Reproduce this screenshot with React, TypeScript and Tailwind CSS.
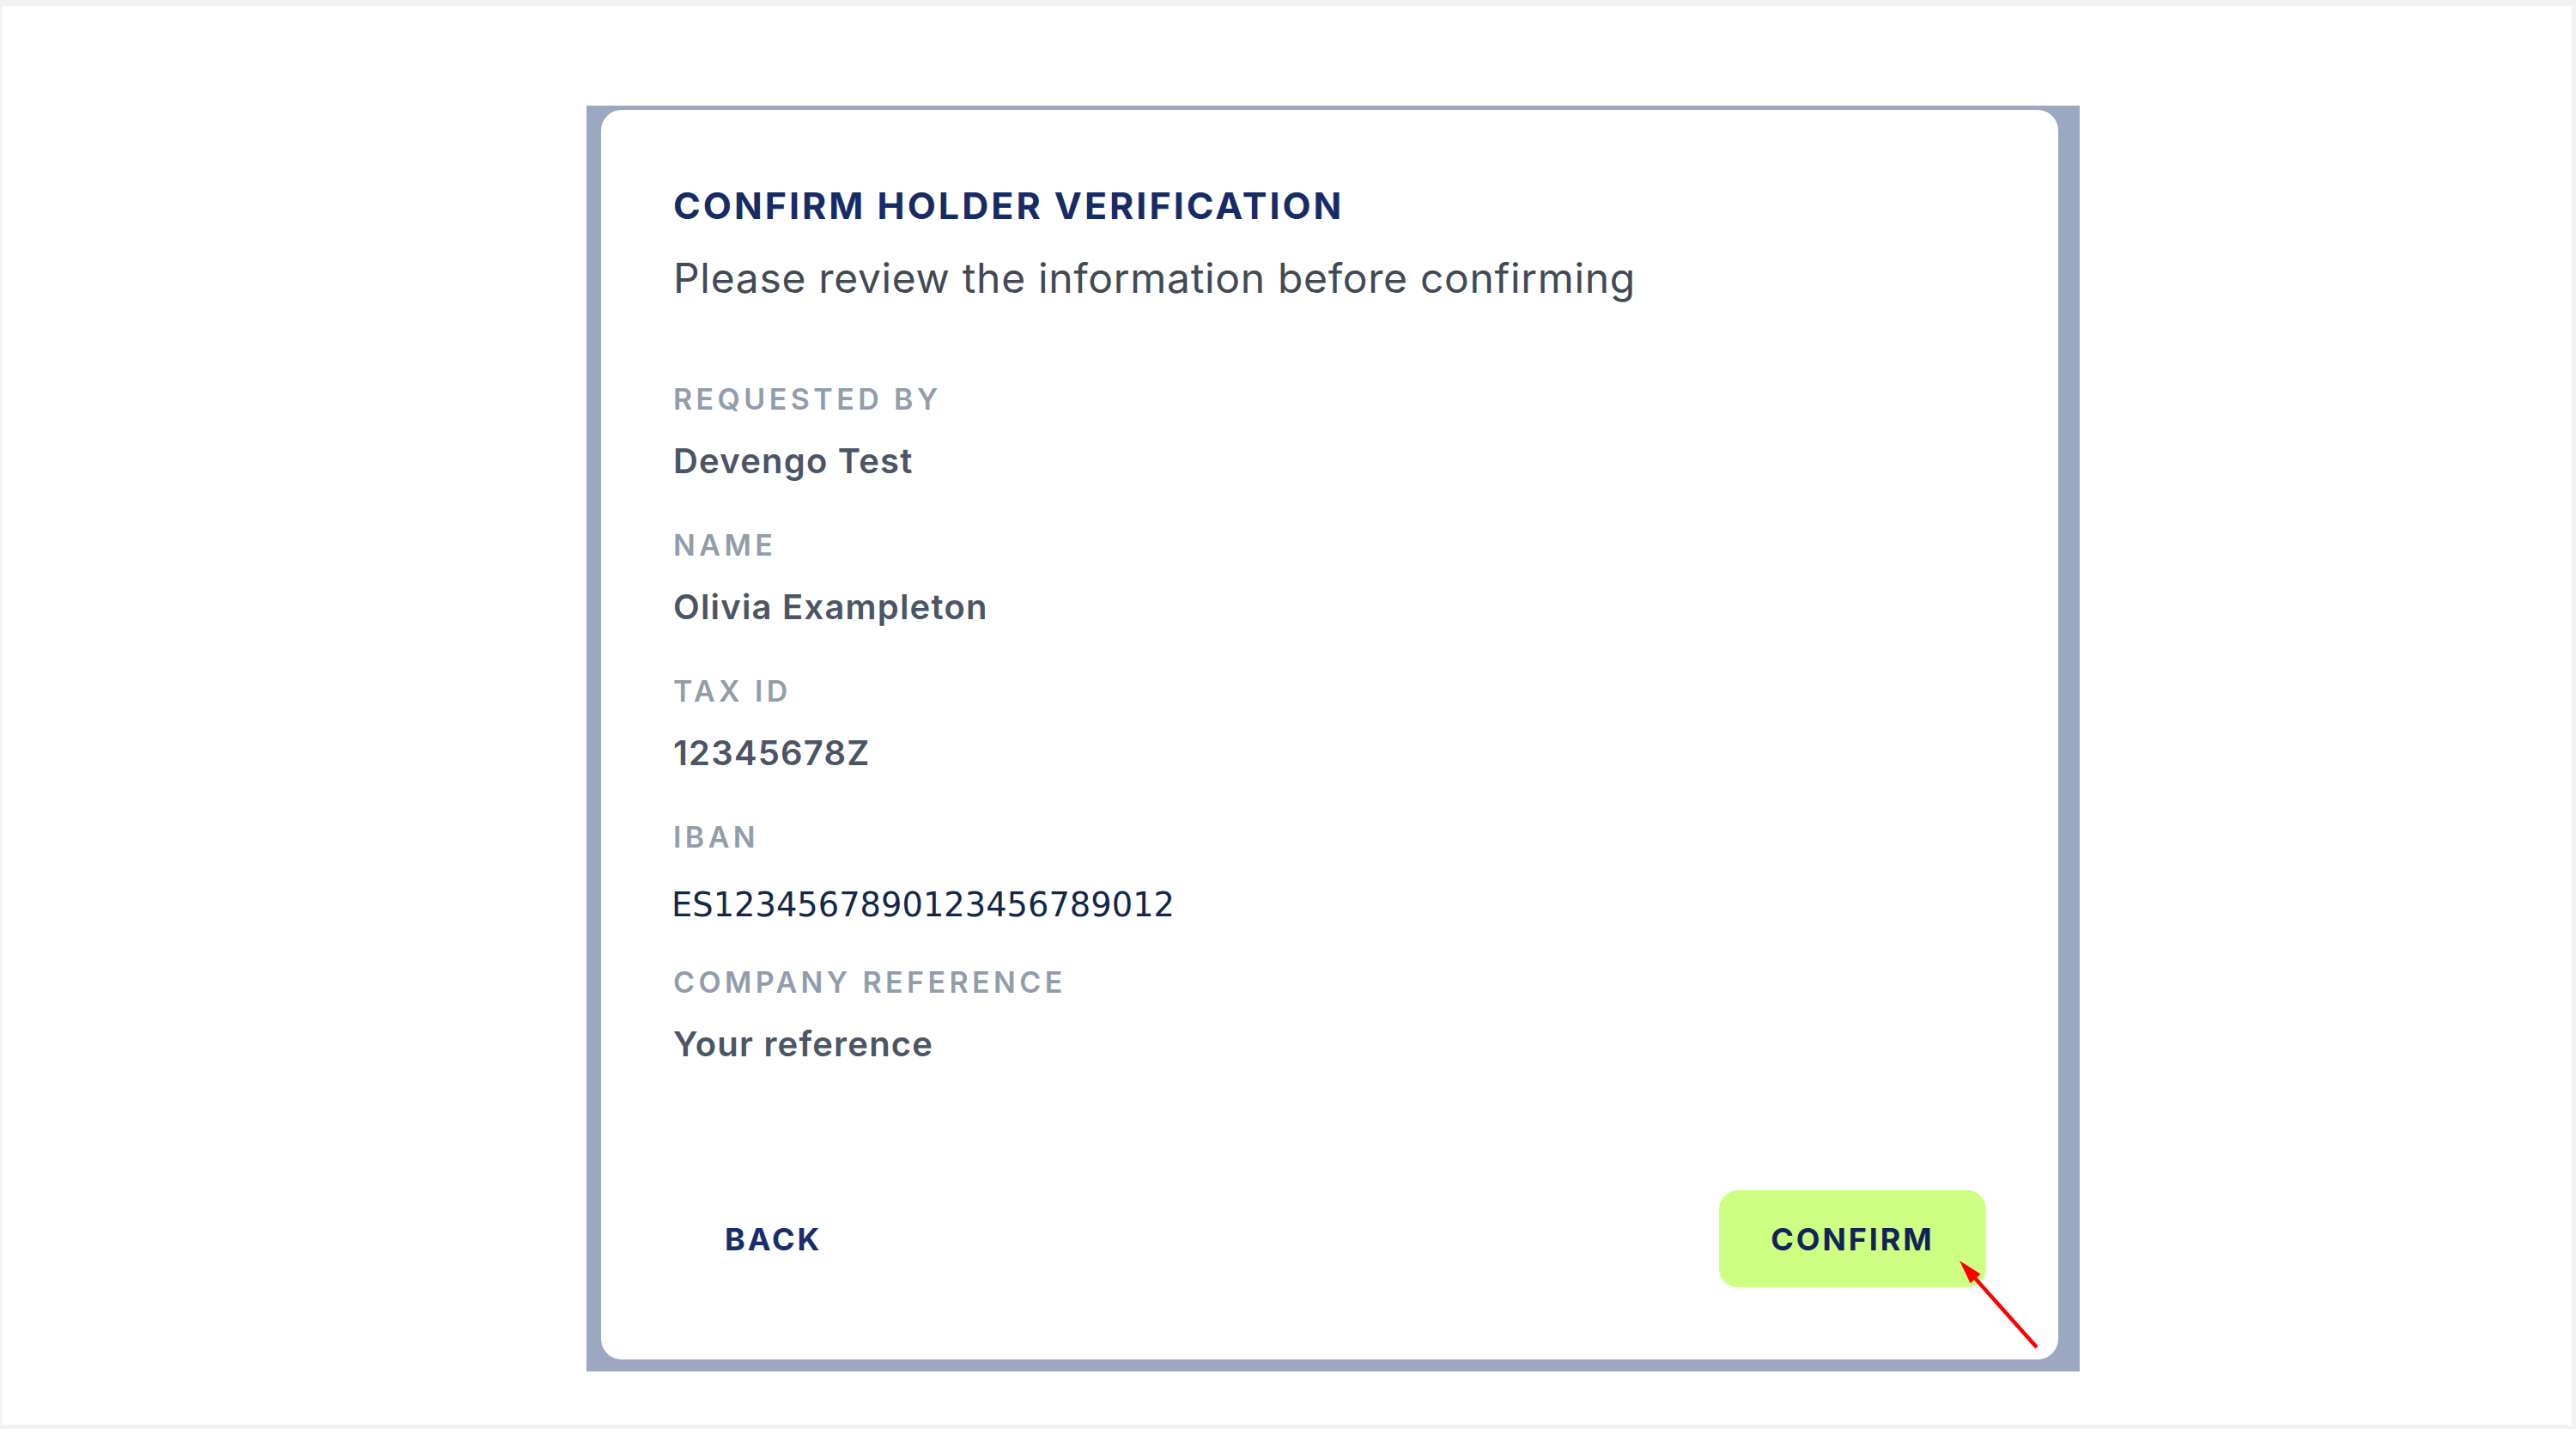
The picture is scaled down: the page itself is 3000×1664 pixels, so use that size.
const fields = [
  { label: "REQUESTED BY", value: "Devengo Test" },
  { label: "NAME", value: "Olivia Exampleton" },
  { label: "TAX ID", value: "12345678Z" },
];

function Field({ label, value }: { label: string; value: string }) {
  return (
    <div className="flex flex-col">
      <span className="text-[34px] leading-none font-semibold tracking-[0.13em] text-[#929dab]">
        {label}
      </span>
      <span className="mt-[35px] text-[40px] leading-none font-semibold tracking-[0.03em] text-[#4b5565]">
        {value}
      </span>
    </div>
  );
}

export default function App() {
  return (
    <div
      className="relative w-[3000px] h-[1664px] bg-[#f2f2f2] pt-[7px] pl-[3px]"
      style={{ fontFamily: "Inter, 'Noto Sans', sans-serif" }}
    >
      <div className="w-[2992px] h-[1652px] bg-white pl-[680px] pt-[116px]">
        {/* backdrop frame */}
        <div className="w-[1739px] h-[1474px] bg-[#9ca7c1] pl-[17px] pt-[5px]">
          <div className="w-[1697px] h-[1455px] bg-white rounded-[24px] flex flex-col pt-[90px] px-[84px] pb-[84px]">
            <h1 className="text-[43px] leading-none font-bold tracking-[0.07em] text-[#172b67]">
              CONFIRM HOLDER VERIFICATION
            </h1>
            <p className="mt-[39px] text-[48px] leading-none tracking-[0.014em] text-[#414a55]">
              Please review the information before confirming
            </p>

            <div className="mt-[100px] flex flex-col gap-[61px]">
              {fields.map((f) => (
                <Field key={f.label} label={f.label} value={f.value} />
              ))}
              <div className="flex flex-col">
                <span className="text-[34px] leading-none font-semibold tracking-[0.13em] text-[#929dab]">
                  IBAN
                </span>
                <span
                  className="mt-[43px] -ml-[2px] text-[38.4px] leading-none text-[#12284a]"
                  style={{ fontFamily: "'DejaVu Sans', sans-serif" }}
                >
                  ES1234567890123456789012
                </span>
              </div>
            </div>

            <div className="mt-[54px] flex flex-col">
              <span className="text-[34px] leading-none font-semibold tracking-[0.13em] text-[#929dab]">
                COMPANY REFERENCE
              </span>
              <span className="mt-[35px] text-[40px] leading-none font-semibold tracking-[0.03em] text-[#4b5565]">
                Your reference
              </span>
            </div>

            <div className="mt-auto flex items-center justify-between">
              <button className="h-[113px] px-[60px] text-[36px] leading-none font-bold tracking-[0.08em] text-[#1a2d6b]">
                BACK
              </button>
              <button className="h-[113px] w-[311px] rounded-[22px] bg-[#ccff82] text-[36px] leading-none font-bold tracking-[0.08em] text-[#13235a]">
                CONFIRM
              </button>
            </div>
          </div>
        </div>
      </div>

      {/* red annotation arrow */}
      <svg
        className="absolute left-[2260px] top-[1450px]"
        width="130"
        height="140"
        viewBox="0 0 130 140"
      >
        <line x1="38" y1="36" x2="112" y2="119" stroke="#ff0000" strokeWidth="4.5" />
        <polygon points="22,18 34.6,44.2 46.6,33.6" fill="#ff0000" />
      </svg>
    </div>
  );
}
